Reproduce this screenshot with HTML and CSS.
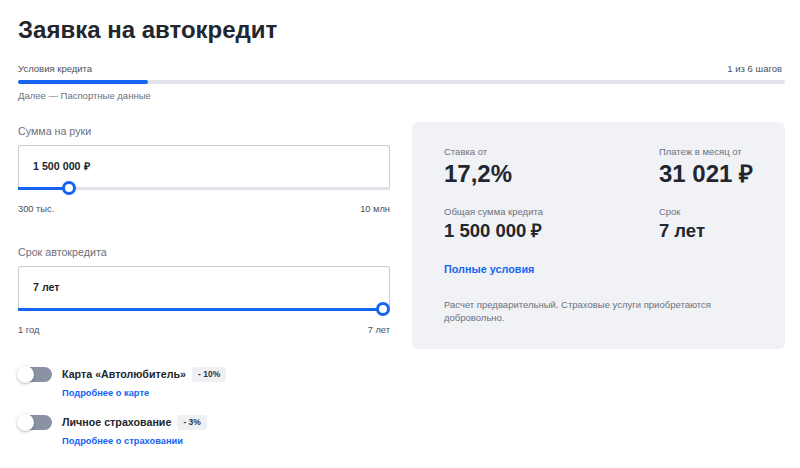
FILE: index.html
```html
<!DOCTYPE html>
<html>
<head>
  <title>Заявка на автокредит</title>
  <meta charset="UTF-8" />
  <link rel="stylesheet" href="styles.css">
</head>
<body>
  <div class="page">
    <h1>Заявка на автокредит</h1>

    <div class="steps">
      <div class="steps-row">
        <span>Условия кредита</span>
        <span>1 из 6 шагов</span>
      </div>
      <div class="steps-bar"><div class="steps-fill"></div></div>
      <div class="steps-next">Далее — Паспортные данные</div>
    </div>

    <div class="main">
      <div class="form">
        <div class="field">
          <div class="field-label">Сумма на руки</div>
          <div class="field-box">
            <div class="field-value">1 500 000 ₽</div>
            <div class="slider" style="--p: 0.1237">
              <div class="slider-fill"></div>
              <div class="slider-thumb"></div>
            </div>
          </div>
          <div class="field-range">
            <span>300 тыс.</span>
            <span>10 млн</span>
          </div>
        </div>

        <div class="field">
          <div class="field-label">Срок автокредита</div>
          <div class="field-box">
            <div class="field-value">7 лет</div>
            <div class="slider" style="--p: 1">
              <div class="slider-fill"></div>
              <div class="slider-thumb"></div>
            </div>
          </div>
          <div class="field-range">
            <span>1 год</span>
            <span>7 лет</span>
          </div>
        </div>

        <div class="option">
          <div class="toggle"><div class="toggle-knob"></div></div>
          <div class="option-body">
            <div class="option-title">
              Карта «Автолюбитель»
              <span class="badge">- 10%</span>
            </div>
            <a class="link" href="#">Подробнее о карте</a>
          </div>
        </div>

        <div class="option">
          <div class="toggle"><div class="toggle-knob"></div></div>
          <div class="option-body">
            <div class="option-title">
              Личное страхование
              <span class="badge">- 3%</span>
            </div>
            <a class="link" href="#">Подробнее о страховании</a>
          </div>
        </div>
      </div>

      <div class="summary">
        <div class="summary-grid">
          <div class="stat">
            <div class="stat-label">Ставка от</div>
            <div class="stat-value big">17,2%</div>
          </div>
          <div class="stat">
            <div class="stat-label">Платеж в месяц от</div>
            <div class="stat-value big">31 021 ₽</div>
          </div>
          <div class="stat">
            <div class="stat-label">Общая сумма кредита</div>
            <div class="stat-value">1 500 000 ₽</div>
          </div>
          <div class="stat">
            <div class="stat-label">Срок</div>
            <div class="stat-value">7 лет</div>
          </div>
        </div>
        <a class="link full" href="#">Полные условия</a>
        <p class="note">Расчет предварительный. Страховые услуги приобретаются добровольно.</p>
      </div>
    </div>
  </div>
</body>
</html>
```

FILE: styles.css
```css
body {
  margin: 0;
  background: #fff;
  font-family: "Liberation Sans", Arial, sans-serif;
  color: #22262e;
}

.page {
  padding: 0 15px 0 18px;
}

h1 {
  font-size: 24px;
  font-weight: bold;
  margin: 0;
  padding-top: 15px;
  line-height: 29px;
  color: #22262e;
}

/* steps */
.steps {
  margin-top: 19px;
}

.steps-row {
  display: flex;
  justify-content: space-between;
  font-size: 9.5px;
  line-height: 12px;
  color: #4a4f59;
  padding-right: 3px;
}

.steps-bar {
  height: 4px;
  margin-top: 5px;
  background: #e1e3e8;
  border-radius: 2px;
}

.steps-fill {
  width: 130px;
  height: 100%;
  background: #1565f2;
  border-radius: 2px;
}

.steps-next {
  margin-top: 6px;
  font-size: 9.5px;
  line-height: 12px;
  color: #6b7180;
}

/* main */
.main {
  display: grid;
  grid-template-columns: 372px 373px;
  column-gap: 22px;
  margin-top: 20px;
  align-items: start;
}

.field {
  padding-top: 2px;
  margin-bottom: 16px;
}

.field-label {
  font-size: 10.7px;
  line-height: 14px;
  color: #6b7180;
}

.field-box {
  margin-top: 7px;
  border: 1px solid #c7cbd3;
  border-bottom: none;
  border-radius: 3px 3px 0 0;
  height: 43px;
  position: relative;
}

.field-value {
  padding: 13px 0 0 14px;
  font-size: 10.7px;
  line-height: 14px;
  font-weight: bold;
  color: #22262e;
}

.slider {
  position: absolute;
  left: -1px;
  right: -1px;
  bottom: -1px;
  height: 3px;
  background: #e1e3e8;
}

.slider-fill {
  width: calc(7px + (100% - 14px) * var(--p));
  height: 100%;
  background: #1565f2;
}

.slider-thumb {
  position: absolute;
  top: -6px;
  left: calc((100% - 14px) * var(--p));
  width: 8px;
  height: 8px;
  border: 3px solid #1565f2;
  border-radius: 50%;
  background: #fff;
}

.field-range {
  display: flex;
  justify-content: space-between;
  margin-top: 14px;
  font-size: 9.3px;
  line-height: 12px;
  color: #4a4f59;
}

.field + .field {
  margin-top: 28px;
}

/* options */
.option {
  display: flex;
  align-items: flex-start;
  gap: 10px;
  margin-top: 31px;
}

.option + .option {
  margin-top: 16px;
}

.toggle {
  width: 34px;
  height: 15px;
  border-radius: 8px;
  background: #8a92a5;
  position: relative;
  flex-shrink: 0;
}

.toggle-knob {
  position: absolute;
  left: -1px;
  top: -1px;
  width: 17px;
  height: 17px;
  border-radius: 50%;
  background: #fff;
  box-shadow: 0 1px 3px rgba(0, 0, 0, 0.3);
}

.option-title {
  display: flex;
  align-items: center;
  gap: 6px;
  font-size: 10.7px;
  line-height: 15px;
  font-weight: bold;
  color: #22262e;
}

.badge {
  font-size: 8.5px;
  line-height: 15px;
  padding: 0 6px;
  background: #eef0f3;
  border-radius: 3px;
  color: #333;
}

.link {
  display: block;
  font-size: 9.3px;
  line-height: 12px;
  font-weight: bold;
  color: #1565f2;
  text-decoration: none;
}

.option .link {
  margin-top: 5px;
}

/* summary */
.summary {
  background: #f1f2f5;
  border-radius: 6px;
  padding: 23px 32px 22px 32px;
  min-height: 182px;
}

.summary-grid {
  display: grid;
  grid-template-columns: auto auto;
  justify-content: space-between;
  row-gap: 17px;
}

.stat-label {
  font-size: 9.5px;
  line-height: 13px;
  color: #6b7180;
}

.stat-value {
  margin-top: 2px;
  font-size: 18.5px;
  line-height: 22px;
  font-weight: bold;
  color: #22262e;
}

.stat-value.big {
  font-size: 24px;
  line-height: 28px;
}

.full {
  font-size: 10.8px;
  line-height: 14px;
  margin-top: 20px;
}

.note {
  margin: 22px 0 0 0;
  font-size: 9.5px;
  line-height: 13px;
  color: #6b7180;
  max-width: 280px;
}
```
